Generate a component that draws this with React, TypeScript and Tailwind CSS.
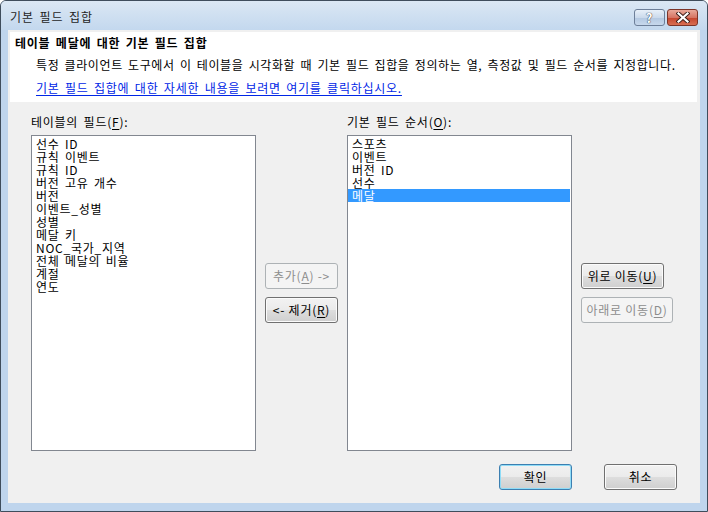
import React from 'react';

type BtnKind = 'normal' | 'disabled' | 'default';

const btnBase =
  'h-[26px] rounded-[3px] border text-[12px] leading-none flex items-center justify-center bg-[linear-gradient(#f2f2f2_0%,#ebebeb_48%,#dddddd_52%,#cfcfcf_100%)]';

const btnKinds: Record<BtnKind, string> = {
  normal: 'border-[#707070] text-black shadow-[inset_0_0_0_1px_#fbfbfb]',
  disabled: 'border-[#adb2b5] text-[#8d8d8d] bg-none bg-[#f4f4f4]',
  default: 'border-[#3c7fb1] text-black shadow-[inset_0_0_0_1px_#8fdcf7]',
};

const Btn: React.FC<{ kind?: BtnKind; className?: string; children: React.ReactNode }> = ({
  kind = 'normal',
  className = '',
  children,
}) => (
  <button type="button" className={`${btnBase} ${btnKinds[kind]} ${className}`}>
    {children}
  </button>
);

const Key: React.FC<{ k: string }> = ({ k }) => (
  <>
    (<span className="underline underline-offset-[2px]">{k}</span>)
  </>
);

const tableFields = [
  '선수 ID',
  '규칙 이벤트',
  '규칙 ID',
  '버전 고유 개수',
  '버전',
  '이벤트_성별',
  '성별',
  '메달 키',
  'NOC_국가_지역',
  '전체 메달의 비율',
  '계절',
  '연도',
];

const orderFields = ['스포츠', '이벤트', '버전 ID', '선수', '메달'];

const ListBox: React.FC<{ items: string[]; selected?: number }> = ({ items, selected }) => (
  <div className="h-[316px] border border-[#828790] bg-white pt-[1px]">
    {items.map((it, i) => (
      <div
        key={it}
        className={`h-[13px] pl-[4px] text-[12px] leading-[13px] whitespace-pre ${
          i === selected ? 'mr-[1px] bg-[#3399ff] text-white' : 'text-black'
        }`}
      >
        {it}
      </div>
    ))}
  </div>
);

export default function App() {
  return (
    <div className="w-[708px] h-[512px] flex flex-col bg-[#bfd5ed] border border-[#3f4d5c] rounded-t-[6px] font-['Noto_Sans_CJK_KR','Noto_Sans',sans-serif] tracking-[0.75px] [word-spacing:2px] overflow-hidden">
      {/* caption */}
      <div className="h-[29px] flex items-center justify-between pl-[9px] pr-[9px] bg-[linear-gradient(#dbe7f4,#c3d8ee)] shrink-0">
        <span className="text-[12px] text-[#1e1e1e] pt-[2px] tracking-[0.9px]">기본 필드 집합</span>
        <div className="flex gap-[2px] pt-[3px]">
          <div className="w-[31px] h-[17px] rounded-[3px] border border-[#6d7f99] bg-[linear-gradient(#e8f0f9_0%,#cbdaec_50%,#b3c8e1_51%,#c7d8ec_100%)] flex items-center justify-center text-[13px] font-bold leading-none text-white [text-shadow:0_0_1px_#2a3340,0_0_1px_#2a3340]">
            ?
          </div>
          <div className="w-[31px] h-[17px] rounded-[3px] border border-[#7c3428] bg-[linear-gradient(#e9a99a_0%,#d67563_50%,#c4432c_51%,#d86e52_100%)] flex items-center justify-center">
            <svg width="14" height="11" viewBox="0 0 14 11">
              <path d="M2.5 1.5 L11.5 9.5 M11.5 1.5 L2.5 9.5" stroke="#3b1f1a" strokeWidth="4" strokeLinecap="square" />
              <path d="M2.5 1.5 L11.5 9.5 M11.5 1.5 L2.5 9.5" stroke="#ffffff" strokeWidth="2.2" strokeLinecap="square" />
            </svg>
          </div>
        </div>
      </div>

      {/* client area */}
      <div className="flex-1 mx-[7px] mb-[8px] bg-[#f0f0f0] flex flex-col">
        <div className="mt-[2px] ml-[2px] mr-[3px] h-[70px] bg-white pt-[3px]">
          <div className="pl-[5px] text-[12px] leading-[16px] font-bold text-black">
            테이블 메달에 대한 기본 필드 집합
          </div>
          <div className="pl-[26px] mt-[6px] text-[12px] leading-[16px] text-black tracking-[0.6px]">
            특정 클라이언트 도구에서 이 테이블을 시각화할 때 기본 필드 집합을 정의하는 열, 측정값 및 필드 순서를 지정합니다.
          </div>
          <div className="pl-[26px] mt-[7px] text-[12px] leading-[16px] text-[#0026e6] underline underline-offset-[2px]">
            기본 필드 집합에 대한 자세한 내용을 보려면 여기를 클릭하십시오.
          </div>
        </div>

        <div className="mt-[12px] px-[23px] grid grid-cols-[225px_73px_225px_auto] gap-x-[9px] gap-y-[5px]">
          <div className="text-[12px] leading-[16px] text-black">
            테이블의 필드<Key k="F" />:
          </div>
          <div />
          <div className="text-[12px] leading-[16px] text-black">
            기본 필드 순서<Key k="O" />:
          </div>
          <div />

          <ListBox items={tableFields} />
          <div className="flex flex-col justify-center gap-[8px]">
            <Btn kind="disabled" className="w-[73px]">
              추가<Key k="A" /> -&gt;
            </Btn>
            <Btn className="w-[73px]">
              &lt;- 제거<Key k="R" />
            </Btn>
          </div>
          <ListBox items={orderFields} selected={4} />
          <div className="flex flex-col justify-center gap-[8px]">
            <Btn className="w-[83px]">
              위로 이동<Key k="U" />
            </Btn>
            <Btn kind="disabled" className="w-[92px]">
              아래로 이동<Key k="D" />
            </Btn>
          </div>
        </div>

        <div className="mt-[13px] pr-[23px] flex justify-end gap-[32px]">
          <Btn kind="default" className="w-[73px]">
            확인
          </Btn>
          <Btn className="w-[73px]">취소</Btn>
        </div>
      </div>
    </div>
  );
}
